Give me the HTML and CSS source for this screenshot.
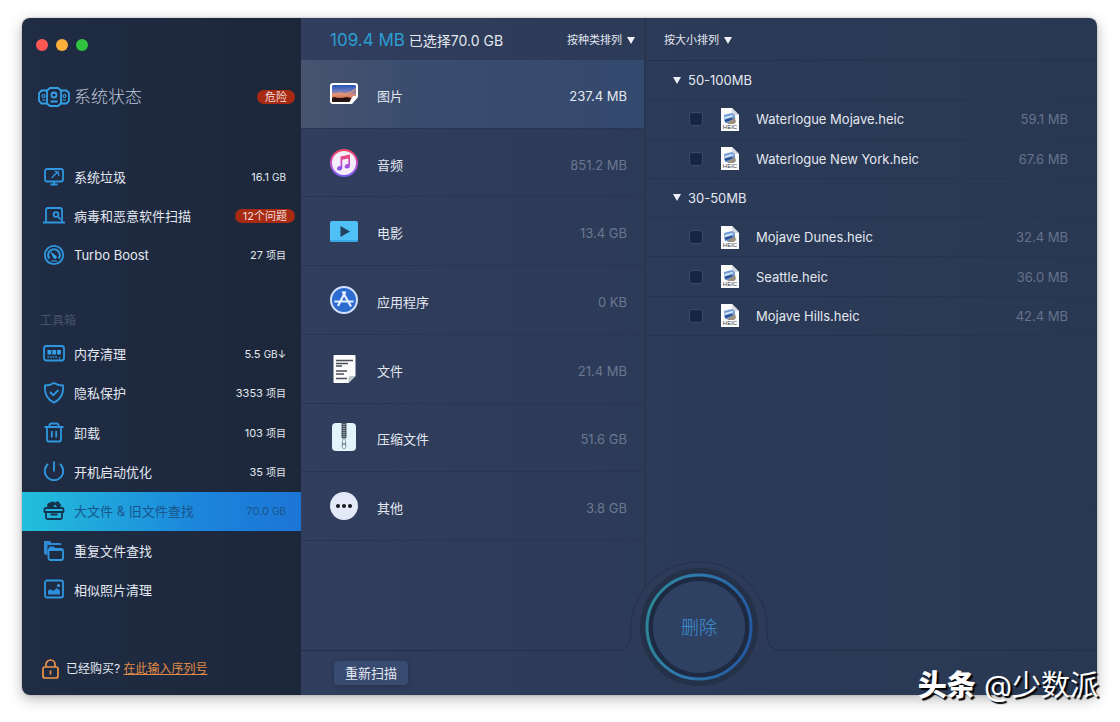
FILE: index.html
```
<!DOCTYPE html>
<html lang="zh-CN">
<head>
<meta charset="utf-8">
<meta name="viewport" content="width=device-width, initial-scale=1">
<title>大文件 &amp; 旧文件查找</title>
<link rel="stylesheet" href="styles.css">
</head>
<body>
<svg class="defs" width="0" height="0" aria-hidden="true">
  <defs>
    <linearGradient id="sky" x1="0" y1="0" x2="0" y2="1">
      <stop offset="0" stop-color="#2454b8"/><stop offset=".35" stop-color="#6a78c0"/><stop offset=".68" stop-color="#e98a68"/><stop offset="1" stop-color="#5a2a22"/>
    </linearGradient>
    <linearGradient id="note" x1="0" y1="0" x2="0" y2="1">
      <stop offset="0" stop-color="#f5465f"/><stop offset=".55" stop-color="#c14fd0"/><stop offset="1" stop-color="#7a5cf0"/>
    </linearGradient>
    <linearGradient id="ring" x1="0" y1=".3" x2="1" y2=".5">
      <stop offset="0" stop-color="#2d8796"/><stop offset=".45" stop-color="#2f78ae"/><stop offset="1" stop-color="#2459a0"/>
    </linearGradient>
    <symbol id="heic" viewBox="0 0 18 23">
      <path fill="#fbfbfb" d="M0 0h11l7 7v16H0z"/>
      <path fill="#d5dae2" d="M11 0l7 7h-4q-3 0-3-3z"/>
      <path fill="#6f9bd6" d="M3 7l8-2 3 2v8H4z"/>
      <path fill="#d9e8f7" d="M4 9l7-2 2 1-9 3z"/>
      <path fill="#2a4f8e" d="M3 12l7-2 3 1-8 3z"/>
      <path fill="#9b8f7f" d="M9 13l5-3 1 4-2 2-7 0z"/>
      <text x="9" y="21" text-anchor="middle" class="heic-tag">HEIC</text>
    </symbol>
  </defs>
</svg>

<div class="window">
  <aside class="sidebar">
    <div class="lights">
      <button class="light light-close" aria-label="关闭"></button>
      <button class="light light-min" aria-label="最小化"></button>
      <button class="light light-max" aria-label="缩放"></button>
    </div>

    <a class="status" href="#status">
      <svg class="status-icon" width="32" height="20" viewBox="0 0 32 20" fill="none" stroke="#35a0e6" stroke-width="1.800">
        <path d="M9 3.500H3.500L1 6v8l2.500 2.500H9M23 3.500h5.500L31 6v8l-2.500 2.500H23"/>
        <path d="M12 1h8l3 2.500v13L20 19h-8l-3-2.500v-13z"/>
        <circle cx="16" cy="8" r="2.500"/><path d="M12.500 14.500h7"/>
        <g stroke-width="1.200"><circle cx="5.500" cy="9" r="1.500"/><path d="M4 13h3.500"/><circle cx="26.500" cy="9" r="1.500"/><path d="M24.500 13H28"/></g>
      </svg>
      <span class="status-name">系统状态</span>
      <span class="badge">危险</span>
    </a>

    <nav class="nav nav-main">
      <a class="item" href="#junk">
        <svg class="icon" width="22" height="22" viewBox="0 0 22 22"><rect x="2" y="3" width="18" height="12.500" rx="2"/><path d="M11 15.500V18M7.500 18.500h7"/><path stroke-width="1.300" d="M8.500 12l5.500-5.500M11.500 5.500q3.500-.5 4.500 4.500M14 7l2-1.500"/></svg>
        <span class="name">系统垃圾</span><span class="value">16.1 <small>GB</small></span>
      </a>
      <a class="item" href="#virus">
        <svg class="icon" width="22" height="22" viewBox="0 0 22 22"><path d="M3 17V5q0-2 2-2h12q2 0 2 2v12M0 17.500h22"/><circle cx="13" cy="9.500" r="2.400"/><path d="M15 11.500l2.500 3"/></svg>
        <span class="name">病毒和恶意软件扫描</span><span class="badge">12个问题</span>
      </a>
      <a class="item" href="#turbo">
        <svg class="icon" width="22" height="22" viewBox="0 0 22 22"><circle cx="11" cy="11" r="9.200"/><path d="M6.300 14.500a5.800 5.800 0 1 1 9.400 0" stroke-width="2.200"/><path fill="#35a0e6" stroke="none" d="M7 7l5.800 4.500a1.800 1.800 0 1 1-2.500 2.200z"/><path d="M8 17h6" stroke-width="1.200"/></svg>
        <span class="name">Turbo Boost</span><span class="value">27 <small>项目</small></span>
      </a>
    </nav>

    <h2 class="section">工具箱</h2>
    <nav class="nav nav-tools">
      <a class="item" href="#memory">
        <svg class="icon" width="22" height="22" viewBox="0 0 22 22"><rect x="1" y="3" width="20" height="14.500" rx="2.500"/><g fill="#35a0e6" stroke="none"><path d="M4.500 7h3.800v4.500H4.500zM9.300 7h3.800v4.500H9.300zM14.100 7h3.800v4.500h-3.800z"/></g><path d="M4.500 14h10M16.500 14v3" stroke-width="1.300" stroke-dasharray="1.600 1"/></svg>
        <span class="name">内存清理</span><span class="value">5.5 <small>GB↓</small></span>
      </a>
      <a class="item" href="#privacy">
        <svg class="icon" width="22" height="22" viewBox="0 0 22 22"><path d="M11 .9Q15 3.500 20 3.500C20.800 11 18.500 17 11 20.600 3.500 17 1.200 11 2 3.500q5 0 9-2.600z"/><path d="M7 10l3.200 3.200L15.500 8"/></svg>
        <span class="name">隐私保护</span><span class="value">3353 <small>项目</small></span>
      </a>
      <a class="item" href="#uninstall">
        <svg class="icon" width="22" height="22" viewBox="0 0 22 22"><path d="M1.500 5h19M6.500 5V2.500L8 1.500h6l1.500 1V5M4 5v12.500q0 2 2 2h10q2 0 2-2V5M8.800 9v6.500M13.200 9v6.500"/></svg>
        <span class="name">卸载</span><span class="value">103 <small>项目</small></span>
      </a>
      <a class="item" href="#startup">
        <svg class="icon" width="22" height="22" viewBox="0 0 22 22"><path d="M11 .5v10M5 3a9.200 9.200 0 1 0 12 0"/></svg>
        <span class="name">开机启动优化</span><span class="value">35 <small>项目</small></span>
      </a>
      <a class="item item-active" href="#large" aria-current="page">
        <svg class="icon" width="22" height="22" viewBox="0 0 22 22"><path d="M1.500 12V9.500q0-1.500 1.500-1.500h16q1.500 0 1.500 1.500V12M.8 12h20.400M3 12v5.500q0 1.500 1.500 1.500h13q1.500 0 1.500-1.500V12M7.500 14.500h7"/><path fill="#12354f" stroke="none" d="M4 6q0-3.500 3.500-3.500Q9.500.5 12 2.500l3-1.500 3.500 4.500-1.500 1.500h-3L12 4.500 10.500 7H4.500z"/></svg>
        <span class="name">大文件 &amp; 旧文件查找</span><span class="value">70.0 <small>GB</small></span>
      </a>
      <a class="item" href="#duplicate">
        <svg class="icon" width="22" height="22" viewBox="0 0 22 22"><path fill="#2f8bd8" stroke="none" d="M1 1h6l1.500 2H17q1.500 0 1.500 2H4.500V15Q1 15 1 12.500z"/><path fill="#2f8bd8" stroke="none" d="M6 6.500h5l1.500 2.500H19v2H6z"/><rect x="5.500" y="9" width="14.500" height="11" rx="2"/></svg>
        <span class="name">重复文件查找</span>
      </a>
      <a class="item" href="#similar">
        <svg class="icon" width="22" height="22" viewBox="0 0 22 22"><rect x="2" y="1.500" width="18" height="17" rx="2"/><path fill="#2c8fdc" stroke="none" d="M5 15.500v-4l2.500-1.300 3 1.800 3-3 3.500 2.500v4z"/><circle cx="15.500" cy="6.500" r="1.500" fill="#35a0e6" stroke="none"/></svg>
        <span class="name">相似照片清理</span>
      </a>
    </nav>

    <div class="license">
      <svg width="17" height="20" viewBox="0 0 17 20" fill="none" stroke="#ef9448" stroke-width="1.700"><rect x="1" y="8" width="15" height="11" rx="2"/><path d="M4 8V5.500a4.500 4.500 0 0 1 9 0V8M8.500 11.500v4"/></svg>
      <span>已经购买? <a href="#serial">在此输入序列号</a></span>
    </div>
  </aside>

  <main class="main">
    <div class="panes">
      <section class="kinds">
        <header class="pane-head">
          <p class="total"><strong>109.4 MB</strong> 已选择70.0 GB</p>
          <span class="sort"><select aria-label="按种类排列"><option>按种类排列</option></select><i class="tri"></i></span>
        </header>
        <div class="kind-list">
          <button class="kind kind-active">
            <svg width="30" height="30" viewBox="0 0 30 30"><path fill="#fff" d="M4 4h22q3 0 3 3v11l-6 7H4q-3 0-3-3V7q0-3 3-3z"/><path fill="url(#sky)" d="M4 6h22l1 1v10h-3l-3 5H3V7z"/><path fill="#26130f" d="M3 19l3-1 2 1h6l4-1 3 1 1 0-1.500 4H3z"/><path fill="#f3a267" d="M3 15q8-3 11-1t13-5v2q-8 6-13 5T3 17z" opacity=".6"/><path fill="#fff" d="M22 24.500l1-5.500 6-1z"/></svg>
            <span class="kind-name">图片</span><span class="kind-size">237.4 MB</span>
          </button>
          <button class="kind">
            <svg width="30" height="30" viewBox="0 0 30 30"><circle cx="15" cy="15" r="13" fill="#f3eef9" stroke="url(#note)" stroke-width="2"/><path fill="url(#note)" d="M11.500 8.500L21 6.500V18a2.700 2.200-20 1 1-1.700-2V10.500l-6 1.300V20a2.700 2.200-20 1 1-1.800-2z"/></svg>
            <span class="kind-name">音频</span><span class="kind-size">851.2 MB</span>
          </button>
          <button class="kind">
            <svg width="30" height="30" viewBox="0 0 30 30"><rect x="1" y="5" width="28" height="21" rx="2" fill="#4fc1f7"/><path d="M1 24h28q0 2-2 2H3q-2 0-2-2z" fill="#38a9e4"/><path fill="#23405f" d="M11.500 10l9.500 5.500-9.500 5.500z"/></svg>
            <span class="kind-name">电影</span><span class="kind-size">13.4 GB</span>
          </button>
          <button class="kind">
            <svg width="30" height="30" viewBox="0 0 30 30"><circle cx="15" cy="15" r="13" fill="#2c6cd0" stroke="#d3e1fa" stroke-width="2"/><g stroke="#e6effd" stroke-width="2.200" fill="none"><path d="M16.500 6.500L9 21M13.500 6.500L22 21.500M5.500 16.500h19"/></g></svg>
            <span class="kind-name">应用程序</span><span class="kind-size">0 KB</span>
          </button>
          <button class="kind">
            <svg width="30" height="30" viewBox="0 0 30 30"><path fill="#fbfbfb" d="M5.500 1h20q1 0 1 1v20l-7 7h-14q-1 0-1-1V2q0-1 1-1z"/><path fill="#bfc4cb" d="M26.500 22l-7 7v-5q0-2 2-2z"/><path stroke="#4c4f55" stroke-width="1.500" d="M7 6.500h17M7 9.500h12M7 12h6M7 17h11M7 20h8M7 24.500h11"/></svg>
            <span class="kind-name">文件</span><span class="kind-size">21.4 MB</span>
          </button>
          <button class="kind">
            <svg width="30" height="30" viewBox="0 0 30 30"><rect x="3" y="1" width="24" height="28" rx="4" fill="#e3f5fb"/><path fill="#4b5563" d="M12.500 1h5v15h-5z"/><path stroke="#8e99a5" stroke-width="2.400" stroke-dasharray="1 1" d="M15 2v13"/><path fill="#8b97a3" d="M13.500 16h3l1 8q-.5 3-2.500 3t-2.500-3z"/><path fill="#e3f5fb" d="M14 17.500h2V21h-2zM13.800 23h2.400v3h-2.400z"/></svg>
            <span class="kind-name">压缩文件</span><span class="kind-size">51.6 GB</span>
          </button>
          <button class="kind">
            <svg width="30" height="30" viewBox="0 0 30 30"><circle cx="15" cy="15" r="14" fill="#e4e9f7"/><g fill="#15181f"><circle cx="9" cy="15" r="2"/><circle cx="15" cy="15" r="2"/><circle cx="21" cy="15" r="2"/></g></svg>
            <span class="kind-name">其他</span><span class="kind-size">3.8 GB</span>
          </button>
        </div>
      </section>

      <section class="files">
        <header class="pane-head">
          <span class="sort"><select aria-label="按大小排列"><option>按大小排列</option></select><i class="tri"></i></span>
        </header>
        <table class="file-table">
          <colgroup><col class="col-check"><col class="col-icon"><col><col class="col-size"></colgroup>
          <tbody>
            <tr><th colspan="4" scope="rowgroup"><button class="group"><i class="tri"></i>50-100MB</button></th></tr>
            <tr><td class="cell-check"><input type="checkbox" id="f1"></td><td><svg class="doc" width="18" height="23"><use href="#heic"/></svg></td><td><label for="f1">Waterlogue Mojave.heic</label></td><td class="cell-size">59.1 MB</td></tr>
            <tr><td class="cell-check"><input type="checkbox" id="f2"></td><td><svg class="doc" width="18" height="23"><use href="#heic"/></svg></td><td><label for="f2">Waterlogue New York.heic</label></td><td class="cell-size">67.6 MB</td></tr>
          </tbody>
          <tbody>
            <tr><th colspan="4" scope="rowgroup"><button class="group"><i class="tri"></i>30-50MB</button></th></tr>
            <tr><td class="cell-check"><input type="checkbox" id="f3"></td><td><svg class="doc" width="18" height="23"><use href="#heic"/></svg></td><td><label for="f3">Mojave Dunes.heic</label></td><td class="cell-size">32.4 MB</td></tr>
            <tr><td class="cell-check"><input type="checkbox" id="f4"></td><td><svg class="doc" width="18" height="23"><use href="#heic"/></svg></td><td><label for="f4">Seattle.heic</label></td><td class="cell-size">36.0 MB</td></tr>
            <tr><td class="cell-check"><input type="checkbox" id="f5"></td><td><svg class="doc" width="18" height="23"><use href="#heic"/></svg></td><td><label for="f5">Mojave Hills.heic</label></td><td class="cell-size">42.4 MB</td></tr>
          </tbody>
        </table>
      </section>
    </div>

    <footer class="foot">
      <div class="foot-side"><button class="rescan">重新扫描</button></div>
      <div class="notch">
        <button class="delete">
          <svg width="164" height="134" viewBox="0 0 164 134" aria-hidden="true">
            <path fill="#2d3b58" stroke="#243048" d="M0 89.500Q14 89.500 14 74V67A68 66 0 0 1 150 67V74Q150 89.500 164 89.500"/>
            <circle cx="82" cy="66" r="59" fill="#243149"/>
            <circle cx="82" cy="66" r="52" fill="#1d2a42" stroke="url(#ring)" stroke-width="3"/>
            <circle cx="82" cy="66" r="46" fill="#2f4163"/>
          </svg>
          <span class="delete-text">删除</span>
        </button>
      </div>
      <div class="foot-side"></div>
    </footer>
  </main>
</div>
<p class="watermark"><b>头条</b> @少数派</p>
</body>
</html>
```

FILE: styles.css
```
* { box-sizing: border-box; }

body {
  margin: 0;
  padding: 18px 23px 27px 22px;
  min-height: 100vh;
  display: flex;
  background: #fff;
  color: #e3e8f1;
  font: 13px/20px Inter, "Noto Sans CJK SC", sans-serif;
}

button, select { font: inherit; color: inherit; border: 0; background: none; padding: 0; margin: 0; }
a { color: inherit; text-decoration: none; }
.defs { position: absolute; }
.heic-tag { font: 6px "Liberation Sans", sans-serif; fill: #3d434d; }

.window {
  flex: 1;
  display: flex;
  border-radius: 8px;
  overflow: hidden;
  box-shadow: 0 4px 14px rgba(0, 0, 0, .28), 0 0 2px rgba(0, 0, 0, .3);
}

/* Sidebar */
.sidebar {
  flex: 0 0 279px;
  display: flex;
  flex-direction: column;
  background: linear-gradient(90deg, #1f2c44, #1d273a);
}
.lights { display: flex; gap: 8px; padding: 21px 14px 0; }
.light { width: 12px; height: 12px; border-radius: 50%; }
.light-close { background: #fc5753; }
.light-min { background: #fdb13b; }
.light-max { background: #2fc340; }

.status { display: flex; align-items: center; gap: 4px; margin-top: 31px; padding: 0 6px 0 16px; height: 30px; }
.status-icon { flex: none; }
.status-name { flex: 1; font-size: 17px; color: #bcc6d8; font-weight: 300; }
.badge {
  padding: 0 8px;
  border-radius: 7px;
  background: #a82a12;
  color: #f0dedd;
  font-size: 11px;
  line-height: 14px;
}

.nav { display: grid; grid-auto-rows: 1fr; }
.nav-main { min-height: 118px; margin-top: 45px; }
.nav-tools { min-height: 276px; margin-top: 3px; }
.item { display: flex; align-items: center; gap: 9px; padding: 0 15px 0 21px; }
.item .badge { margin-right: -9px; }
.icon { flex: none; fill: none; stroke: #2f97e0; stroke-width: 1.800; }
.name { flex: 1; }
.value { font-size: 11px; }
.value small { font-size: 10px; }
.item-active { background: linear-gradient(90deg, #23bfdc, #1c84dc 65%, #1c75d6); color: #17568c; }
.item-active .icon { stroke: #12354f; }

.section { margin: 36px 0 0 18px; font-size: 12px; line-height: 20px; font-weight: 400; color: #465268; }

.license { display: flex; align-items: center; gap: 7px; margin-top: auto; padding: 0 0 16px 20px; font-size: 12px; }
.license a { color: #e08b45; text-decoration: underline; }

/* Main area */
.main {
  flex: 1;
  min-width: 0;
  display: flex;
  flex-direction: column;
  background: linear-gradient(90deg, #313e5d, #2b3a57 50%, #293852);
}
.panes { flex: 1; display: flex; }
.pane-head { display: flex; align-items: center; justify-content: space-between; height: 42px; padding-top: 2px; }
.sort { display: flex; align-items: center; gap: 5px; font-size: 11px; }
.sort select { appearance: none; }
.tri { width: 0; height: 0; border: solid transparent; border-width: 7px 4px 0; border-top-color: #eef2f8; }

.kinds { flex: 0 0 345px; border-right: 2px solid #28354f; }
.kinds .pane-head { padding-left: 29px; padding-right: 9px; }
.total { margin: 0; font-size: 14px; }
.total strong { font-size: 17px; font-weight: 400; color: #2c9ed2; }

.kind-list { display: grid; grid-auto-rows: 1fr; min-height: 481px; }
.kind { display: flex; align-items: center; padding: 0 17px 0 28px; text-align: left; border-bottom: 1px solid #2a3651; }
.kind svg { margin-right: 18px; }
.kind-name { flex: 1; padding-top: 4px; }
.kind-size { padding-top: 4px; color: #6b7790; }
.kind-active { background: linear-gradient(90deg, #48546f, #3b4d6f 30%, #34496e); }
.kind-active .kind-size { color: #e3e8f1; }

.files { flex: 1; min-width: 0; }
.files .pane-head { padding-left: 18px; }
.file-table { width: 100%; height: 276px; border-collapse: collapse; table-layout: fixed; border-top: 1px solid #25324b; }
.file-table tr { height: 39px; border-bottom: 1px solid #263450; }
.file-table td, .file-table th { padding: 0; font-weight: 400; text-align: left; vertical-align: middle; }
.col-check { width: 75px; }
.col-icon { width: 35px; }
.col-size { width: 100px; }
.group { display: flex; align-items: center; gap: 7px; padding-left: 27px; }
.cell-check input {
  appearance: none;
  display: block;
  width: 14px;
  height: 14px;
  margin: 0 0 0 43px;
  border: 1px solid #3a4a68;
  border-radius: 3px;
  background: #162543;
}
.doc { display: block; }
.file-table .cell-size { padding-right: 29px; text-align: right; color: #66738b; }

/* Bottom bar */
.foot { display: flex; height: 45px; }
.foot-side { flex: 1; border-top: 1px solid #243048; }
.rescan {
  margin: 10px 0 0 33px;
  padding: 0 11px;
  line-height: 24px;
  border-radius: 4px;
  background: #394b70;
  box-shadow: 0 1px 5px rgba(20, 30, 50, .4);
}
.notch { position: relative; flex: 0 0 164px; }
.delete { position: absolute; left: 0; bottom: 0; display: grid; place-items: center; }
.delete > * { grid-area: 1 / 1; }
.delete-text { font-size: 18px; font-weight: 300; color: #3c93d6; }

.watermark {
  position: absolute;
  right: 21px;
  bottom: 16px;
  margin: 0;
  color: #fff;
  font-size: 29px;
  line-height: 40px;
  text-shadow: 2px 2px 1px #000;
}
.watermark b { font-weight: 900; }
```
